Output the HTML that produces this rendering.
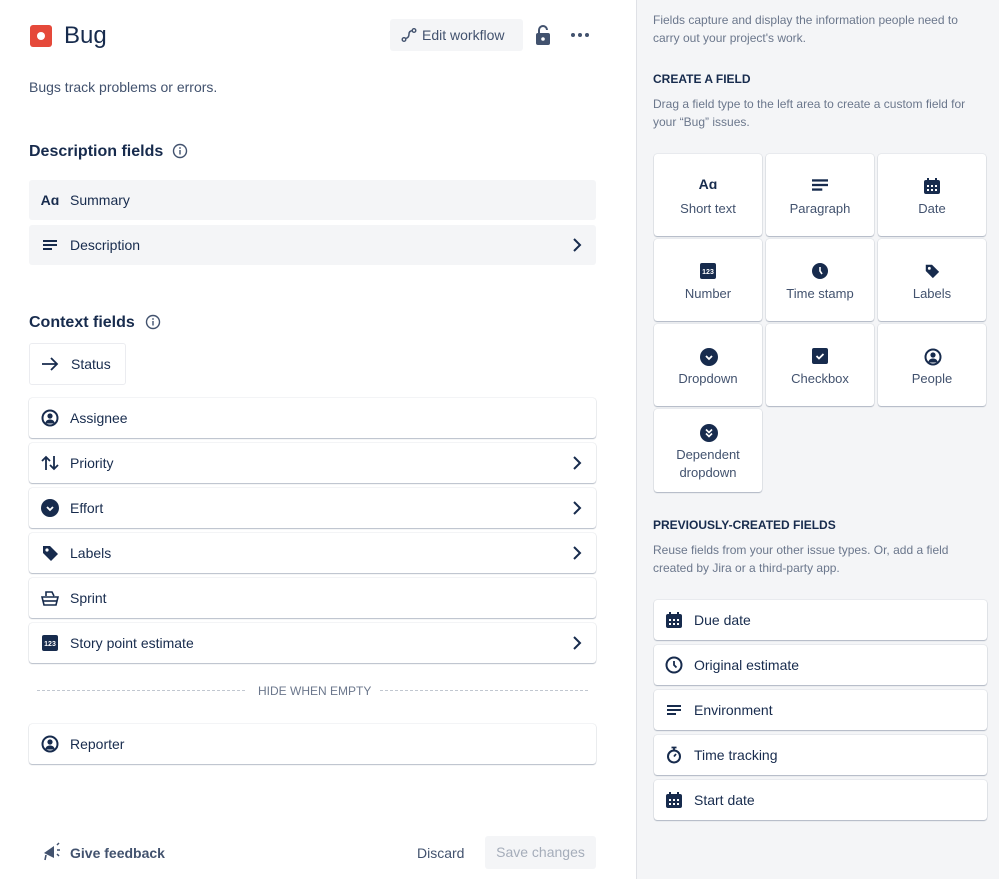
<!DOCTYPE html>
<html><head><meta charset="utf-8"><style>
*{box-sizing:border-box;margin:0;padding:0}
body{width:999px;height:879px;overflow:hidden;background:#fff;font-family:"Liberation Sans",sans-serif;color:#172b4d;position:relative}
.a{position:absolute}
.row{position:absolute;left:29px;width:567px;height:40px;background:#fff;border-radius:3px;box-shadow:0 1px 1px rgba(9,30,66,.25),0 0 1px rgba(9,30,66,.31);font-size:14px;display:flex;align-items:center}
.row.g{background:#f4f5f7;box-shadow:none}
.row .ic{width:20px;margin-left:11px;margin-right:10px;display:flex;justify-content:center}
.row .ch{position:absolute;right:14px;top:12px}
.rp{position:absolute;left:636px;top:0;width:363px;height:879px;background:#f4f5f7;border-left:1px solid #dfe1e6}
.card{position:absolute;width:108px;height:82px;background:#fff;border-radius:3px;box-shadow:0 1px 1px rgba(9,30,66,.25),0 0 1px rgba(9,30,66,.31);font-size:13px;color:#42526e;text-align:center}
.card svg{position:absolute;left:46px;top:24px}
.card span{position:absolute;left:0;right:0;top:46px;line-height:18px}
.pr{position:absolute;left:654px;width:333px;height:40px;background:#fff;border-radius:3px;box-shadow:0 1px 1px rgba(9,30,66,.25),0 0 1px rgba(9,30,66,.31);font-size:14px;display:flex;align-items:center;color:#172b4d}
.pr .ic{width:20px;margin-left:10px;margin-right:10px;display:flex;justify-content:center}
.h{font-size:16px;font-weight:bold;color:#172b4d}
.sm{font-size:12px;color:#6b778c;line-height:18px}
</style></head><body>

<div class="a" style="left:30px;top:25px;width:22px;height:22px;background:#e5493a;border-radius:3px"><div class="a" style="left:7px;top:7px;width:8px;height:8px;background:#fff;border-radius:50%"></div></div>
<div class="a" style="left:64px;top:22px;font-size:24px;font-weight:500">Bug</div>
<div class="a" style="left:390px;top:19px;width:133px;height:32px;background:#f4f5f7;border-radius:3px;font-size:14px;color:#42526e;display:flex;align-items:center">
<svg style="margin-left:11px;margin-right:5px" width="16" height="16" viewBox="0 0 16 16"><circle cx="3" cy="12.5" r="1.8" fill="none" stroke="#42526e" stroke-width="1.4"/><circle cx="13" cy="3.5" r="1.8" fill="none" stroke="#42526e" stroke-width="1.4"/><path d="M4.5 11.5 Q8 11 8 7 Q8 4 11.2 3.6" fill="none" stroke="#42526e" stroke-width="1.5"/></svg>Edit workflow</div>
<svg class="a" style="left:535px;top:24px" width="16" height="22" viewBox="0 0 16 22"><path d="M4 9V6a4 4 0 0 1 8 0" fill="none" stroke="#42526e" stroke-width="2"/><rect x="1" y="9" width="14" height="12" rx="2" fill="#42526e"/><circle cx="8" cy="15" r="1.8" fill="#fff"/></svg>
<div class="a" style="left:571px;top:33px;display:flex;gap:3px"><i style="width:4px;height:4px;background:#42526e;border-radius:50%"></i><i style="width:4px;height:4px;background:#42526e;border-radius:50%"></i><i style="width:4px;height:4px;background:#42526e;border-radius:50%"></i></div>

<div class="a" style="left:29px;top:79px;font-size:14px;color:#42526e">Bugs track problems or errors.</div>

<div class="a h" style="left:29px;top:143px">Description fields</div>
<svg class="a" style="left:172px;top:143px" width="16" height="16" viewBox="0 0 16 16"><circle cx="8" cy="8" r="6.5" fill="none" stroke="#42526e" stroke-width="1.4"/><rect x="7.3" y="7" width="1.4" height="4.5" fill="#42526e"/><circle cx="8" cy="5" r=".9" fill="#42526e"/></svg>

<div class="row g" style="top:180px"><div class="ic" style="font-weight:bold;font-size:14px">Aɑ</div>Summary</div>
<div class="row g" style="top:225px"><div class="ic"><svg width="14" height="12" viewBox="0 0 14 12"><rect y="1" width="14" height="2" fill="#172b4d"/><rect y="5" width="14" height="2" fill="#172b4d"/><rect y="9" width="9" height="2" fill="#172b4d"/></svg></div>Description<svg class="ch" width="10" height="16" viewBox="0 0 10 16"><path d="M2 2l6 6-6 6" fill="none" stroke="#172b4d" stroke-width="2"/></svg></div>

<div class="a h" style="left:29px;top:314px">Context fields</div>
<svg class="a" style="left:145px;top:314px" width="16" height="16" viewBox="0 0 16 16"><circle cx="8" cy="8" r="6.5" fill="none" stroke="#42526e" stroke-width="1.4"/><rect x="7.3" y="7" width="1.4" height="4.5" fill="#42526e"/><circle cx="8" cy="5" r=".9" fill="#42526e"/></svg>

<div class="a" style="left:29px;top:343px;width:97px;height:42px;border:1px solid #ebecf0;border-radius:3px;font-size:14px;display:flex;align-items:center"><svg style="margin-left:11px;margin-right:12px" width="18" height="16" viewBox="0 0 18 16"><path d="M1 8h15M10 2l6 6-6 6" fill="none" stroke="#172b4d" stroke-width="1.8"/></svg>Status</div>

<div class="row" style="top:398px"><div class="ic"><svg width="18" height="18" viewBox="0 0 18 18"><circle cx="9" cy="9" r="7.5" fill="none" stroke="#172b4d" stroke-width="2"/><circle cx="9" cy="7" r="2.6" fill="#172b4d"/><path d="M4 14.5c1-3 2.5-4 5-4s4 1 5 4z" fill="#172b4d"/></svg></div>Assignee</div>
<div class="row" style="top:443px"><div class="ic"><svg width="18" height="16" viewBox="0 0 18 16"><path d="M5 15V2M1 6l4-4 4 4M13 1v13M9 10l4 4 4-4" fill="none" stroke="#172b4d" stroke-width="1.8"/></svg></div>Priority<svg class="ch" width="10" height="16" viewBox="0 0 10 16"><path d="M2 2l6 6-6 6" fill="none" stroke="#172b4d" stroke-width="2"/></svg></div>
<div class="row" style="top:488px"><div class="ic"><svg width="18" height="18" viewBox="0 0 18 18"><circle cx="9" cy="9" r="9" fill="#172b4d"/><path d="M6 8l3 3 3-3" fill="none" stroke="#fff" stroke-width="1.8"/></svg></div>Effort<svg class="ch" width="10" height="16" viewBox="0 0 10 16"><path d="M2 2l6 6-6 6" fill="none" stroke="#172b4d" stroke-width="2"/></svg></div>
<div class="row" style="top:533px"><div class="ic"><svg width="18" height="18" viewBox="0 0 18 18"><path d="M2 2h7l8 8-7 7-8-8z" fill="#172b4d"/><circle cx="6" cy="6" r="1.6" fill="#fff"/></svg></div>Labels<svg class="ch" width="10" height="16" viewBox="0 0 10 16"><path d="M2 2l6 6-6 6" fill="none" stroke="#172b4d" stroke-width="2"/></svg></div>
<div class="row" style="top:578px"><div class="ic"><svg width="18" height="16" viewBox="0 0 18 16"><path d="M5 6V2h6l2 4M1 7h16l-2 8H3z" fill="none" stroke="#172b4d" stroke-width="1.6"/><path d="M2 11h14" stroke="#172b4d" stroke-width="1.6"/></svg></div>Sprint</div>
<div class="row" style="top:623px"><div class="ic"><svg width="16" height="16" viewBox="0 0 16 16"><rect width="16" height="16" rx="2" fill="#172b4d"/><text x="8" y="11" font-size="7" font-family="Liberation Sans" fill="#fff" text-anchor="middle" font-weight="bold">123</text></svg></div>Story point estimate<svg class="ch" width="10" height="16" viewBox="0 0 10 16"><path d="M2 2l6 6-6 6" fill="none" stroke="#172b4d" stroke-width="2"/></svg></div>

<div class="a" style="left:37px;top:690px;width:208px;border-top:1px dashed #c1c7d0"></div>
<div class="a" style="left:380px;top:690px;width:208px;border-top:1px dashed #c1c7d0"></div>
<div class="a" style="left:258px;top:684px;font-size:12px;color:#6b778c">HIDE WHEN EMPTY</div>

<div class="row" style="top:724px"><div class="ic"><svg width="18" height="18" viewBox="0 0 18 18"><circle cx="9" cy="9" r="7.5" fill="none" stroke="#172b4d" stroke-width="2"/><circle cx="9" cy="7" r="2.6" fill="#172b4d"/><path d="M4 14.5c1-3 2.5-4 5-4s4 1 5 4z" fill="#172b4d"/></svg></div>Reporter</div>

<svg class="a" style="left:42px;top:842px" width="20" height="20" viewBox="0 0 20 20"><path d="M2 11l10-7v12z" fill="#42526e"/><path d="M4 13l-1 5" stroke="#42526e" stroke-width="1.6"/><path d="M15 3l2-2M15 8h3M15 12l2 2" stroke="#42526e" stroke-width="1.5"/></svg>
<div class="a" style="left:70px;top:845px;font-size:14px;font-weight:bold;color:#42526e">Give feedback</div>
<div class="a" style="left:417px;top:845px;font-size:14px;color:#42526e">Discard</div>
<div class="a" style="left:485px;top:836px;width:111px;height:33px;background:#f4f5f7;border-radius:3px;font-size:14px;color:#a5adba;text-align:center;line-height:33px">Save changes</div>

<div class="rp"></div>
<div class="a sm" style="left:653px;top:11px;width:330px">Fields capture and display the information people need to carry out your project's work.</div>
<div class="a" style="left:653px;top:72px;font-size:12px;font-weight:bold;color:#172b4d">CREATE A FIELD</div>
<div class="a sm" style="left:653px;top:95px;width:335px">Drag a field type to the left area to create a custom field for your “Bug” issues.</div>

<div class="card" style="left:654px;top:154px"><div class="a" style="left:0;right:0;top:22px;font-weight:bold;font-size:14px;color:#172b4d">Aɑ</div><span>Short text</span></div>
<div class="card" style="left:766px;top:154px"><svg width="16" height="14" viewBox="0 0 14 12"><rect y="1" width="14" height="2" fill="#172b4d"/><rect y="5" width="14" height="2" fill="#172b4d"/><rect y="9" width="9" height="2" fill="#172b4d"/></svg><span>Paragraph</span></div>
<div class="card" style="left:878px;top:154px"><svg width="16" height="16" viewBox="0 0 16 16"><rect y="2" width="16" height="14" rx="2" fill="#172b4d"/><rect x="3" y="0" width="2" height="4" fill="#172b4d"/><rect x="11" y="0" width="2" height="4" fill="#172b4d"/><g fill="#fff"><rect x="3" y="7" width="2" height="2"/><rect x="7" y="7" width="2" height="2"/><rect x="11" y="7" width="2" height="2"/><rect x="3" y="11" width="2" height="2"/><rect x="7" y="11" width="2" height="2"/><rect x="11" y="11" width="2" height="2"/></g></svg><span>Date</span></div>
<div class="card" style="left:654px;top:239px"><svg width="16" height="16" viewBox="0 0 16 16"><rect width="16" height="16" rx="2" fill="#172b4d"/><text x="8" y="11" font-size="7" font-family="Liberation Sans" fill="#fff" text-anchor="middle" font-weight="bold">123</text></svg><span>Number</span></div>
<div class="card" style="left:766px;top:239px"><svg width="16" height="16" viewBox="0 0 16 16"><circle cx="8" cy="8" r="8" fill="#172b4d"/><path d="M8 4v4l2 3" fill="none" stroke="#fff" stroke-width="1.6"/></svg><span>Time stamp</span></div>
<div class="card" style="left:878px;top:239px"><svg width="16" height="16" viewBox="0 0 18 18"><path d="M2 2h7l8 8-7 7-8-8z" fill="#172b4d"/><circle cx="6" cy="6" r="1.6" fill="#fff"/></svg><span>Labels</span></div>
<div class="card" style="left:654px;top:324px"><svg width="18" height="18" viewBox="0 0 18 18"><circle cx="9" cy="9" r="9" fill="#172b4d"/><path d="M6 8l3 3 3-3" fill="none" stroke="#fff" stroke-width="1.8"/></svg><span>Dropdown</span></div>
<div class="card" style="left:766px;top:324px"><svg width="16" height="16" viewBox="0 0 16 16"><rect width="16" height="16" rx="2" fill="#172b4d"/><path d="M4.5 8l2.5 2.5 4.5-4.5" fill="none" stroke="#fff" stroke-width="1.8"/></svg><span>Checkbox</span></div>
<div class="card" style="left:878px;top:324px"><svg width="18" height="18" viewBox="0 0 18 18"><circle cx="9" cy="9" r="7.5" fill="none" stroke="#172b4d" stroke-width="2"/><circle cx="9" cy="7" r="2.6" fill="#172b4d"/><path d="M4 14.5c1-3 2.5-4 5-4s4 1 5 4z" fill="#172b4d"/></svg><span>People</span></div>
<div class="card" style="left:654px;top:409px;height:83px"><svg width="18" height="18" viewBox="0 0 18 18" style="top:15px"><circle cx="9" cy="9" r="9" fill="#172b4d"/><path d="M6 5.5l3 3 3-3M6 9.5l3 3 3-3" fill="none" stroke="#fff" stroke-width="1.6"/></svg><span style="top:37px">Dependent<br>dropdown</span></div>

<div class="a" style="left:653px;top:518px;font-size:12px;font-weight:bold;color:#172b4d">PREVIOUSLY-CREATED FIELDS</div>
<div class="a sm" style="left:653px;top:541px;width:330px">Reuse fields from your other issue types. Or, add a field created by Jira or a third-party app.</div>

<div class="pr" style="top:600px"><div class="ic"><svg width="16" height="16" viewBox="0 0 16 16"><rect y="2" width="16" height="14" rx="2" fill="#172b4d"/><rect x="3" y="0" width="2" height="4" fill="#172b4d"/><rect x="11" y="0" width="2" height="4" fill="#172b4d"/><g fill="#fff"><rect x="3" y="7" width="2" height="2"/><rect x="7" y="7" width="2" height="2"/><rect x="11" y="7" width="2" height="2"/><rect x="3" y="11" width="2" height="2"/><rect x="7" y="11" width="2" height="2"/><rect x="11" y="11" width="2" height="2"/></g></svg></div>Due date</div>
<div class="pr" style="top:645px"><div class="ic"><svg width="18" height="18" viewBox="0 0 18 18"><circle cx="9" cy="9" r="7.5" fill="none" stroke="#172b4d" stroke-width="2"/><path d="M9 5v4l2.5 2.5" fill="none" stroke="#172b4d" stroke-width="1.8"/></svg></div>Original estimate</div>
<div class="pr" style="top:690px"><div class="ic"><svg width="14" height="12" viewBox="0 0 14 12"><rect y="1" width="14" height="2" fill="#172b4d"/><rect y="5" width="14" height="2" fill="#172b4d"/><rect y="9" width="9" height="2" fill="#172b4d"/></svg></div>Environment</div>
<div class="pr" style="top:735px"><div class="ic"><svg width="16" height="18" viewBox="0 0 16 18"><circle cx="8" cy="10.5" r="6" fill="none" stroke="#172b4d" stroke-width="2"/><path d="M5.5 1.5h5M8 2v2.5M8 10.5l2-2.5" stroke="#172b4d" stroke-width="1.8" fill="none"/></svg></div>Time tracking</div>
<div class="pr" style="top:780px"><div class="ic"><svg width="16" height="16" viewBox="0 0 16 16"><rect y="2" width="16" height="14" rx="2" fill="#172b4d"/><rect x="3" y="0" width="2" height="4" fill="#172b4d"/><rect x="11" y="0" width="2" height="4" fill="#172b4d"/><g fill="#fff"><rect x="3" y="7" width="2" height="2"/><rect x="7" y="7" width="2" height="2"/><rect x="11" y="7" width="2" height="2"/><rect x="3" y="11" width="2" height="2"/><rect x="7" y="11" width="2" height="2"/><rect x="11" y="11" width="2" height="2"/></g></svg></div>Start date</div>

</body></html>
